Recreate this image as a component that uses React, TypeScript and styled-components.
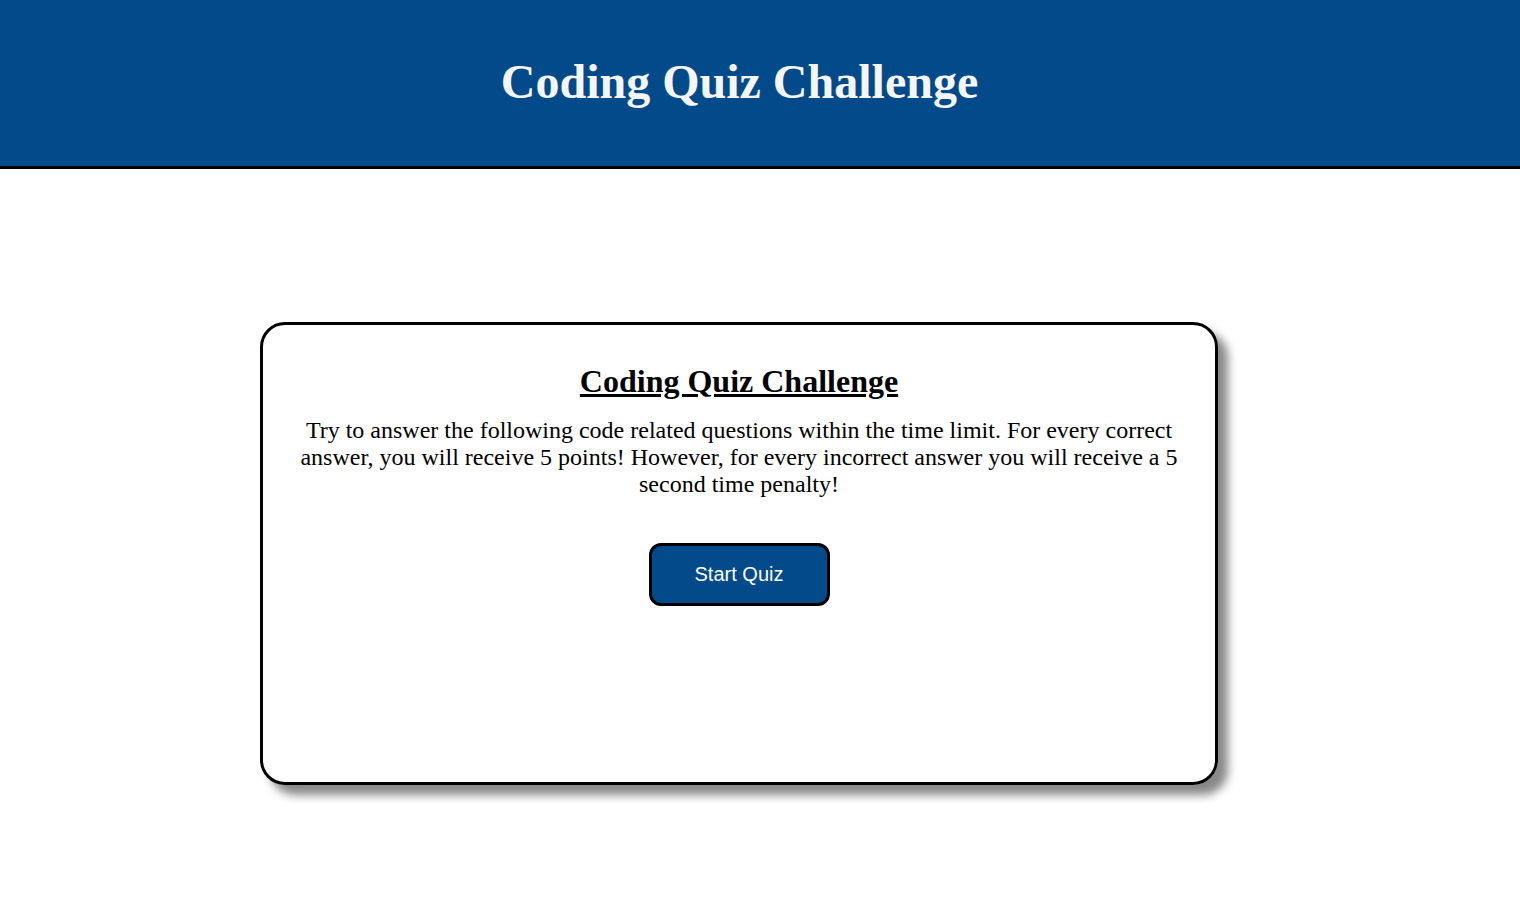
import React from "react";
import styled, { createGlobalStyle } from "styled-components";

const GlobalStyle = createGlobalStyle`
  body {
    margin: 0;
    background-color: #ffffff;
    font-family: "Liberation Serif", "Times New Roman", serif;
  }
`;

const Header = styled.header`
  background-color: #034a8a;
  border-bottom: 3px solid #000000;
  height: 166px;
  display: flex;
  justify-content: center;
  padding-right: 41px;
`;

const Title = styled.h1`
  margin: 0;
  padding-top: 54px;
  font-size: 48px;
  font-weight: bold;
  color: #f5f5f5;
`;

const Main = styled.main`
  display: flex;
  justify-content: center;
  padding: 153px 42px 40px 0;
`;

const Card = styled.section`
  box-sizing: border-box;
  width: 958px;
  height: 463px;
  border: 3px solid #000000;
  border-radius: 25px;
  box-shadow: 10px 10px 10px #888888;
  padding: 38px 36px 0;
  display: flex;
  flex-direction: column;
  align-items: center;
  text-align: center;
`;

const CardTitle = styled.h2`
  margin: 0;
  font-size: 32px;
  text-decoration: underline;
`;

const Intro = styled.p`
  margin: 17px 0 0;
  font-size: 24px;
  line-height: 27px;
`;

const StartButton = styled.button`
  margin-top: 45px;
  width: 181px;
  height: 63px;
  background-color: #034a8a;
  color: #ffffff;
  border: 3px solid #000000;
  border-radius: 12px;
  font-family: "Liberation Sans", Arial, sans-serif;
  font-size: 20px;
  cursor: pointer;
`;

const App = () => {
  return (
    <>
      <GlobalStyle />
      <Header>
        <Title>Coding Quiz Challenge</Title>
      </Header>
      <Main>
        <Card>
          <CardTitle>Coding Quiz Challenge</CardTitle>
          <Intro>
            Try to answer the following code related questions within the time
            limit. For every correct answer, you will receive 5 points! However,
            for every incorrect answer you will receive a 5 second time penalty!
          </Intro>
          <StartButton>Start Quiz</StartButton>
        </Card>
      </Main>
    </>
  );
};

export default App;
